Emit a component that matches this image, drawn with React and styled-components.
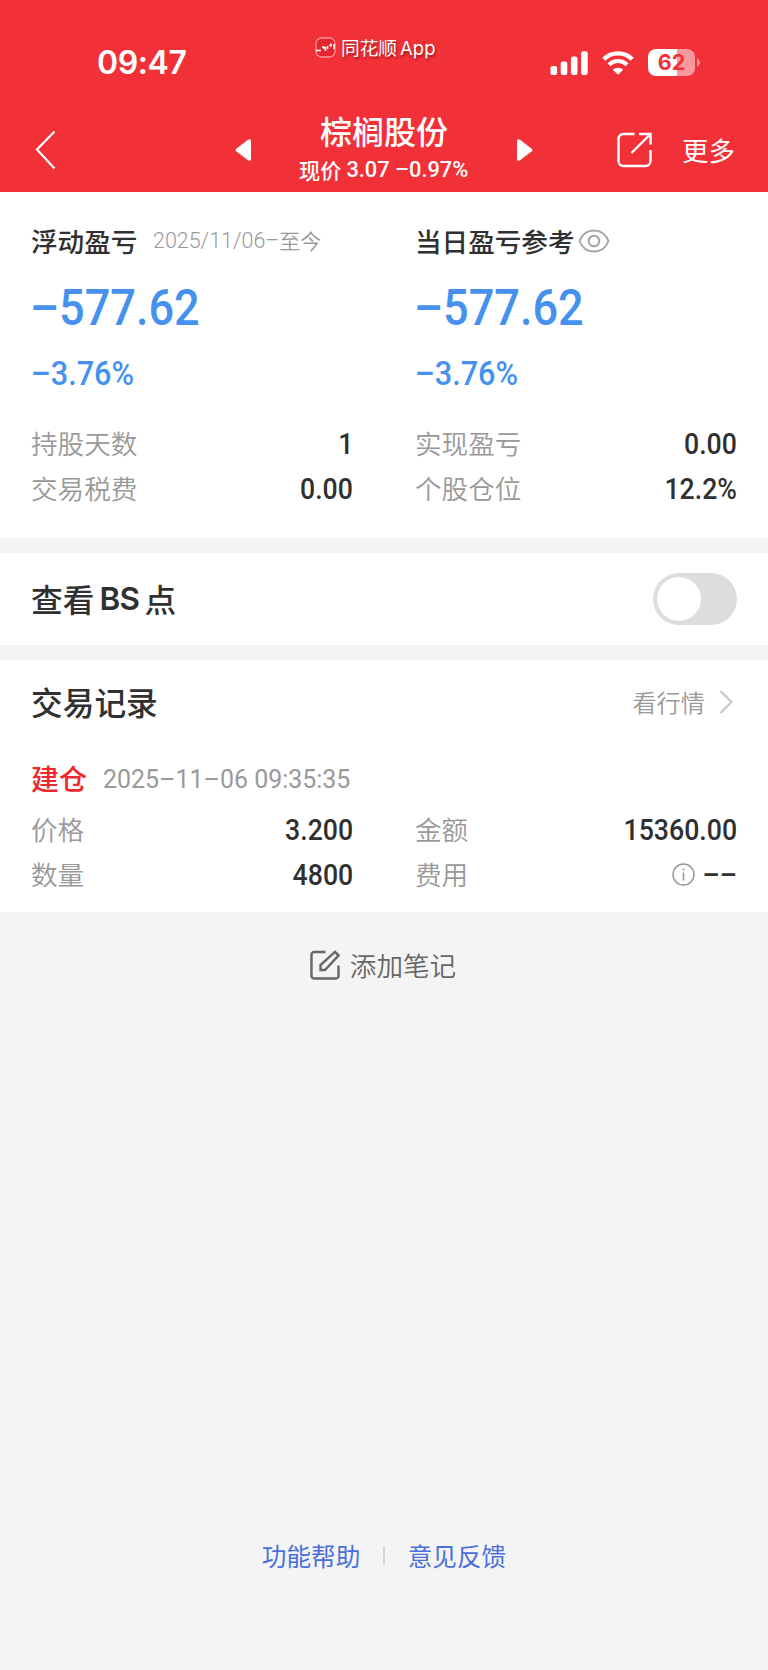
import React, { useState } from 'react';
import styled, { createGlobalStyle } from 'styled-components';

const GlobalStyle = createGlobalStyle`
  * {
    box-sizing: border-box;
  }

  body {
    margin: 0;
    background-color: #f4f4f4;
    font-family: 'Noto Sans CJK SC', sans-serif;
    color: #303030;
  }

  svg {
    display: block;
    flex-shrink: 0;
  }
`;

const Page = styled.div`
  width: 768px;
  height: 1670px;
  display: flex;
  flex-direction: column;
  overflow: hidden;
`;

const Header = styled.header`
  height: 192px;
  flex-shrink: 0;
  background-color: #f23037;
  color: #fff;
`;

const StatusBar = styled.div`
  height: 101px;
  padding: 0 68px 0 97px;
  display: grid;
  grid-template-columns: 218px 1fr 150px;
`;

const Clock = styled.div`
  padding-top: 43px;
  font: 600 32px/40px Inter, sans-serif;
  letter-spacing: -0.4px;
`;

const Brand = styled.div`
  height: 34px;
  margin-top: 30px;
  display: flex;
  align-items: center;
  gap: 5px;
  font-size: 18.7px;
  line-height: 34px;
  text-shadow: 1px 2px 2px rgba(90, 0, 0, 0.5);
`;

const Latin = styled.span`
  margin-left: 3px;
  font-family: Inter, sans-serif;
  font-size: 18.5px;
`;

const StatusIcons = styled.div`
  height: 27px;
  margin-top: 49px;
  display: flex;
  align-items: center;
`;

const Signal = styled.svg`
  margin-right: 14px;
`;

const Wifi = styled.svg`
  margin-right: 14px;
`;

const Battery = styled.div`
  width: 48px;
  height: 27px;
  border-radius: 8px;
  background: linear-gradient(90deg, #fff 62%, #f9989c 62%);
  color: #f23037;
  font: 700 21.5px/27px Inter, sans-serif;
  text-align: center;
`;

const NavBar = styled.nav`
  height: 83px;
  padding: 0 32px 0 35px;
  display: grid;
  grid-template-columns: 198px 302px 82px 1fr;
  align-items: center;
`;

const StockSwitcher = styled.div`
  height: 83px;
  display: flex;
  justify-content: space-between;
  align-items: center;
  padding: 15px 2px 0;
`;

const StockInfo = styled.div`
  margin-top: -6px;
  display: flex;
  flex-direction: column;
  align-items: center;
`;

const StockName = styled.h1`
  margin: 0;
  font-size: 32px;
  line-height: 44px;
  font-weight: 500;
`;

const StockPrice = styled.div`
  height: 32px;
  margin-top: 2px;
  padding-left: 5px;
  display: flex;
  align-items: center;
  font-size: 21.2px;
  font-weight: 500;
  line-height: 32px;
  white-space: nowrap;
`;

const ShareIcon = styled.svg`
  margin: 14px 0 0 82px;
`;

const More = styled.span`
  padding: 14px 0 0 65px;
  font-size: 26.4px;
  line-height: 40px;
  white-space: nowrap;
`;

// digits are squeezed a little to get the DIN proportions
const Num = styled.span`
  display: inline-block;
  font-family: Roboto, sans-serif;
  font-size: ${({ $size }) => $size || 28.7}px;
  font-weight: ${({ $weight }) => $weight || 500};
  white-space: pre;
  transform: scaleX(${({ $scale }) => $scale || 0.93});
  transform-origin: ${({ $origin }) => $origin || 'left'} center;
`;

const Section = styled.section`
  height: ${({ $height }) => $height}px;
  margin-bottom: ${({ $gap }) => $gap || 0}px;
  padding: 0 31px;
  flex-shrink: 0;
  background-color: #fff;
`;

const Columns = styled.div`
  display: grid;
  grid-template-columns: 322px 322px;
  column-gap: 62px;
`;

const SummaryTitle = styled.div`
  height: 48px;
  margin-top: 24px;
  display: flex;
  align-items: center;
  font-size: 26.6px;
  font-weight: 500;
  white-space: nowrap;
`;

const Period = styled.span`
  height: 32px;
  margin-left: 16px;
  display: flex;
  align-items: center;
  color: #999;
  font-size: 21px;
  font-weight: 350;
  line-height: 30px;

  ${Num} {
    margin: 2px -7px 0 0;
  }
`;

const EyeIcon = styled.svg`
  margin: 1px 0 0 3px;
`;

const Amount = styled.div`
  height: 60px;
  margin: 14px 0 0 -1px;
  line-height: 60px;
  color: #4691ee;
`;

const Percent = styled.div`
  height: 40px;
  margin: 16px 0 27px;
  line-height: 40px;
  color: #4691ee;
`;

const Row = styled.div`
  height: 45.3px;
  display: flex;
  justify-content: space-between;
  align-items: center;
`;

const Label = styled.span`
  margin-bottom: 2px;
  color: #999;
  font-size: 26.6px;
  font-weight: 350;
  line-height: 40px;
`;

const Value = styled.span`
  display: flex;
  align-items: center;
  gap: ${({ $gap }) => $gap || 0}px;
`;

const SectionTitle = styled.h2`
  margin: -2px 0 0;
  display: flex;
  align-items: center;
  gap: 5px;
  font-size: 31.7px;
  line-height: 46px;
  font-weight: 500;

  b {
    padding-top: 3px;
    font: 600 31.5px/46px Inter, sans-serif;
    letter-spacing: -0.6px;
  }
`;

const SwitchRow = styled.div`
  height: 92px;
  display: flex;
  justify-content: space-between;
  align-items: center;
`;

const Switch = styled.button`
  width: 84px;
  height: 52px;
  padding: 4px;
  border: 0;
  border-radius: 26px;
  display: flex;
  justify-content: ${({ $on }) => ($on ? 'flex-end' : 'flex-start')};
  background-color: ${({ $on }) => ($on ? '#f23037' : '#ddd')};
  cursor: pointer;
`;

const Knob = styled.span`
  width: 44px;
  height: 44px;
  border-radius: 50%;
  background-color: #fff;
`;

const RecordHeader = styled.div`
  height: 84px;
  display: flex;
  justify-content: space-between;
  align-items: center;
`;

const QuoteLink = styled.a`
  padding-right: 4px;
  display: flex;
  align-items: center;
  gap: 14px;
  color: #999;
  font-size: 24.2px;
  font-weight: 350;
  line-height: 40px;
`;

const RecordTime = styled.div`
  height: 46px;
  margin: 12px 0 5px;
  display: flex;
  align-items: center;
  gap: 16px;
  color: #999;
`;

const Tag = styled.span`
  margin-top: -1px;
  color: #ec2a2e;
  font-size: 28px;
  line-height: 44px;
  font-weight: 500;
`;

const AddNote = styled.div`
  height: 54px;
  margin: 26px 2px 0 0;
  display: flex;
  justify-content: center;
  align-items: center;
  gap: 10px;
  color: #666;
  font-size: 26.6px;
  font-weight: 350;
`;

const Footer = styled.footer`
  height: 40px;
  margin: auto 0 95px;
  display: flex;
  justify-content: center;
  align-items: center;
  gap: 23px;
  color: #4a6fdc;
  font-size: 24.6px;
  line-height: 40px;
`;

const Divider = styled.span`
  width: 1.5px;
  height: 19px;
  background-color: #d5d5d5;
`;

const summaries = [
  {
    title: '浮动盈亏',
    period: true,
    rows: [
      ['持股天数', '1'],
      ['交易税费', '0.00'],
    ],
  },
  {
    title: '当日盈亏参考',
    rows: [
      ['实现盈亏', '0.00'],
      ['个股仓位', '12.2%'],
    ],
  },
];

function InfoRow({ label, value, icon }) {
  return (
    <Row>
      <Label>{label}</Label>
      <Value $gap={5}>
        {icon}
        <Num $origin="right">{value}</Num>
      </Value>
    </Row>
  );
}

function Arrow({ right }) {
  return (
    <svg width="16" height="22" viewBox="0 0 16 22" fill="#fff">
      <path
        d={
          right
            ? 'M0 2.5Q0-1 3 .8L14.5 9.4Q16.5 11 14.5 12.6L3 21.2Q0 23 0 19.5Z'
            : 'M16 2.5Q16-1 13 .8L1.5 9.4Q-.5 11 1.5 12.6L13 21.2Q16 23 16 19.5Z'
        }
      />
    </svg>
  );
}

function App() {
  const [showPoints, setShowPoints] = useState(false);

  return (
    <Page>
      <GlobalStyle />
      <Header>
        <StatusBar>
          <Clock>09:47</Clock>
          <Brand>
            <svg width="21" height="21" viewBox="0 0 21 21" fill="none">
              <rect x="1" y="1" width="19" height="19" rx="5.5" fill="#e5262e" stroke="#fa989b" strokeWidth="1.3" />
              <path d="M1 13.5h3M5 14.5v-2M7 10h2v2M10.5 10v4M12.5 9v3M14.5 9l1-1M16 6.5v3M19 7v5" stroke="#fff" strokeWidth="1.6" />
            </svg>
            <span>
              同花顺
              <Latin>App</Latin>
            </span>
          </Brand>
          <StatusIcons>
            <Signal width="38" height="24" viewBox="0 0 38 24" fill="#fff">
              <rect x="0.5" y="15" width="6.6" height="9" rx="2" />
              <rect x="10.7" y="10.5" width="6.6" height="13.5" rx="2" />
              <rect x="20.9" y="5.5" width="6.6" height="18.5" rx="2" />
              <rect x="31.1" y="0.3" width="6.6" height="23.7" rx="2" />
            </Signal>
            <Wifi width="32" height="24" viewBox="0 0 32 24" fill="none">
              <path d="M1.8 8.2a20.2 20.2 0 0 1 28.4 0" stroke="#fff" strokeWidth="4.4" />
              <path d="M7 13.7a12.8 12.8 0 0 1 18 0" stroke="#fff" strokeWidth="4.2" />
              <path d="M10.8 18.7a7.6 7.6 0 0 1 10.4 0L16.8 23a1.1 1.1 0 0 1-1.6 0Z" fill="#fff" />
            </Wifi>
            <Battery>62</Battery>
            <svg width="5" height="9" viewBox="0 0 5 9">
              <path d="M2 0q3 2 3 4.5T2 9Z" fill="#f9989c" />
            </svg>
          </StatusIcons>
        </StatusBar>
        <NavBar>
          <svg width="21" height="82" viewBox="0 0 21 82" fill="none">
            <path d="M19.5 29.5L2 47.5l17.5 19" stroke="#fff" strokeWidth="2.2" />
          </svg>
          <StockSwitcher>
            <Arrow />
            <StockInfo>
              <StockName>棕榈股份</StockName>
              <StockPrice>
                现价<Num $size={22.7} $scale={0.96}> 3.07 –0.97%</Num>
              </StockPrice>
            </StockInfo>
            <Arrow right />
          </StockSwitcher>
          <ShareIcon width="35" height="36" viewBox="0 0 35 36" fill="none" stroke="#fff" strokeWidth="2.4">
            <path d="M17.5 2h-11a5 5 0 0 0-5 5v22a5 5 0 0 0 5 5h22a5 5 0 0 0 5-5V18" />
            <path d="M22 2h11.5v10.5M33 2.500L14.500 21" />
          </ShareIcon>
          <More>更多</More>
        </NavBar>
      </Header>

      <Section $height={345.6} $gap={15.4}>
        <Columns>
          {summaries.map(({ title, period, rows }) => (
            <div key={title}>
              <SummaryTitle>
                {title}
                {period ? (
                  <Period>
                    <Num $size={22.6} $weight={350} $scale={0.95}>2025/11/06–</Num>
                    至今
                  </Period>
                ) : (
                  <EyeIcon width="32" height="24" viewBox="0 0 32 24" fill="none" stroke="#a5a5a5" strokeWidth="2">
                    <path d="M1.5 12C4 5.500 9.500 1.500 16 1.500S28 5.500 30.500 12C28 18.500 22.500 22.500 16 22.500S4 18.500 1.500 12Z" />
                    <circle cx="16" cy="12" r="5.3" />
                  </EyeIcon>
                )}
              </SummaryTitle>
              <Amount>
                <Num $size={49.6} $scale={0.91}>–577.62</Num>
              </Amount>
              <Percent>
                <Num $size={32.3} $scale={0.95}>–3.76%</Num>
              </Percent>
              {rows.map(([label, value]) => (
                <InfoRow key={label} label={label} value={value} />
              ))}
            </div>
          ))}
        </Columns>
      </Section>

      <Section $height={92} $gap={15}>
        <SwitchRow>
          <SectionTitle>
            查看<b>BS</b>点
          </SectionTitle>
          <Switch $on={showPoints} onClick={() => setShowPoints(!showPoints)}>
            <Knob />
          </Switch>
        </SwitchRow>
      </Section>

      <Section $height={252}>
        <RecordHeader>
          <SectionTitle>交易记录</SectionTitle>
          <QuoteLink>
            看行情
            <svg width="14" height="24" viewBox="0 0 14 24" fill="none">
              <path d="M1.5 1l11 11-11 11" stroke="#c8c8c8" strokeWidth="2.2" />
            </svg>
          </QuoteLink>
        </RecordHeader>
        <RecordTime>
          <Tag>建仓</Tag>
          <Num $size={26.7} $weight={400} $scale={0.935}>2025–11–06 09:35:35</Num>
        </RecordTime>
        <Columns>
          <InfoRow label="价格" value="3.200" />
          <InfoRow label="金额" value="15360.00" />
          <InfoRow label="数量" value="4800" />
          <InfoRow
            label="费用"
            value="––"
            icon={
              <svg width="23" height="23" viewBox="0 0 23 23" fill="none" stroke="#999">
                <circle cx="11.5" cy="11.5" r="10.5" strokeWidth="1.5" />
                <path d="M11.5 5.5v2M11.5 9.5v8" strokeWidth="1.6" />
              </svg>
            }
          />
        </Columns>
      </Section>

      <AddNote>
        <svg width="30" height="30" viewBox="0 0 30 30" fill="none" stroke="#666" strokeWidth="2.4">
          <path d="M15.5 2H4a2.5 2.5 0 0 0-2.5 2.5V26A2.5 2.5 0 0 0 4 28.5h22a2.5 2.5 0 0 0 2.5-2.5V15.5" />
          <path d="M10.500 20v-5L25 1.800l3.600 3.600L15 20Z" />
        </svg>
        添加笔记
      </AddNote>

      <Footer>
        <span>功能帮助</span>
        <Divider />
        <span>意见反馈</span>
      </Footer>
    </Page>
  );
}

export default App;
